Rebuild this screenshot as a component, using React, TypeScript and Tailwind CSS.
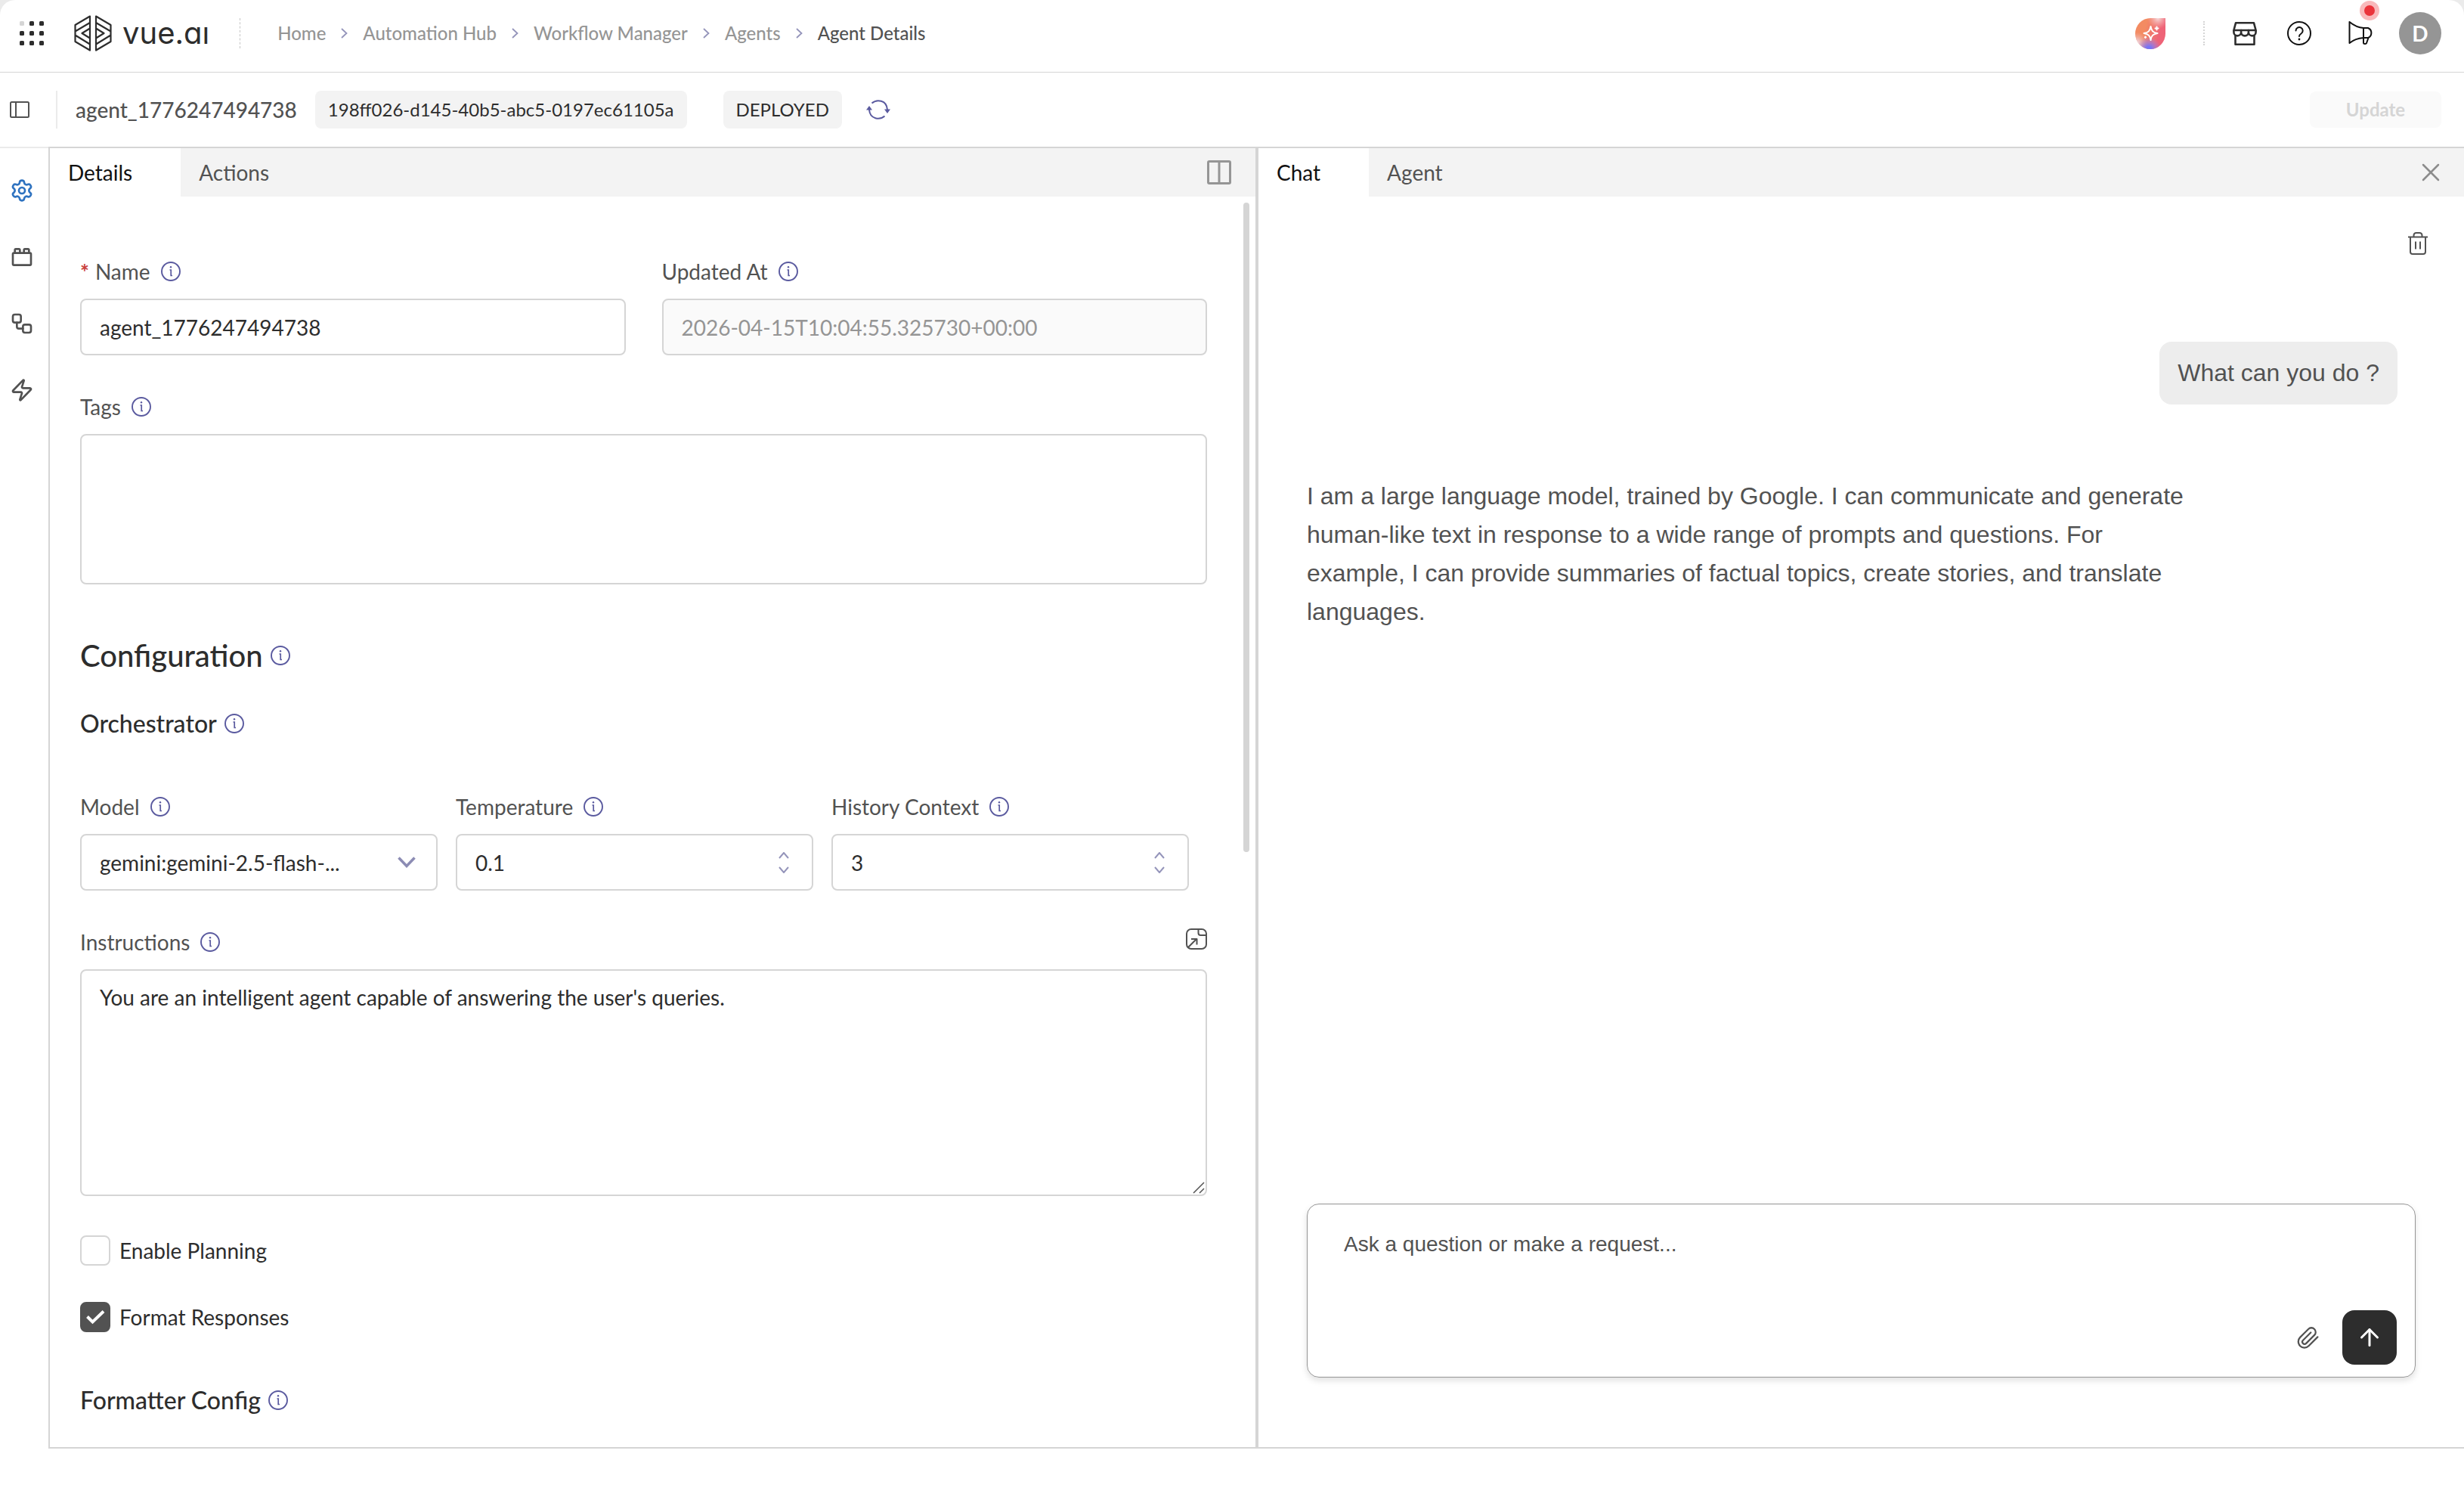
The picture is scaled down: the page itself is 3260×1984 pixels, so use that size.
import { useId, useState, type ReactNode } from 'react'
import { ArrowUp, Settings, ToyBrick, Workflow, X, Zap } from 'lucide-react'
import clsx from 'clsx'

const CRUMBS = ['Home', 'Automation Hub', 'Workflow Manager', 'Agents', 'Agent Details']

const SIDE_ITEMS = [
  { label: 'Settings', Icon: Settings },
  { label: 'Tools', Icon: ToyBrick },
  { label: 'Workflow', Icon: Workflow },
  { label: 'Triggers', Icon: Zap },
]

const FIELD =
  'block w-full rounded-lg border-2 border-[#d5d5d5] bg-white px-6 text-[28px] text-[#2d2d2d] outline-none'

function AppsIcon() {
  return (
    <svg width="32" height="32" viewBox="0 0 32 32" fill="#2d2d2d">
      {[0, 13, 26].map((y) =>
        [0, 13, 26].map((x) => (
          <rect key={`${x}-${y}`} x={x} y={y} width="6" height="6" rx="1.5" fill={x + y === 0 ? '#d5d5d5' : '#2d2d2d'} />
        )),
      )}
    </svg>
  )
}

function LogoMark() {
  const half = 'M21 1.5 1.5 13v22L21 46.500ZM21 10 1.500 21.500M21 17.500 10.500 24 21 30.500M1.500 26.500 21 38.500'
  return (
    <svg width="50" height="48" viewBox="0 0 50 48" fill="none" stroke="#2d2d2d" strokeWidth="2.2" strokeLinejoin="round">
      <path d={half} />
      <path d={half} transform="matrix(-1 0 0 1 50 0)" />
    </svg>
  )
}

function SparkIcon() {
  return (
    <svg width="40" height="41" viewBox="0 0 40 41">
      <defs>
        <linearGradient id="spark-base" x1="0" y1="0.300" x2="1" y2="0.600">
          <stop offset="0.300" stopColor="#f38b62" />
          <stop offset="0.800" stopColor="#ee6377" />
        </linearGradient>
        <radialGradient id="spark-blue" cx="0.450" cy="1" r="0.400">
          <stop offset="0.200" stopColor="#7474f8" />
          <stop offset="1" stopColor="#a58af0" stopOpacity="0" />
        </radialGradient>
        <radialGradient id="spark-pale" cx="0.750" cy="0" r="0.350">
          <stop offset="0" stopColor="#f6dcdc" />
          <stop offset="1" stopColor="#f6b0b0" stopOpacity="0" />
        </radialGradient>
        <radialGradient id="spark-left" cx="0.050" cy="0.800" r="0.350">
          <stop offset="0" stopColor="#efe0f4" />
          <stop offset="1" stopColor="#f0c0c0" stopOpacity="0" />
        </radialGradient>
      </defs>
      {['spark-base', 'spark-left', 'spark-blue', 'spark-pale'].map((id) => (
        <path key={id} fill={`url(#${id})`} d="M20 0h20v20.500A20 20.500 0 1 1 20 0Z" />
      ))}
      <g fill="none" stroke="#fff" strokeWidth="2" strokeLinejoin="round" strokeLinecap="round">
        <path d="M20.500 11c1 6 3 8 9 9-6 1-8 3-9 9-1-6-3-8-9-9 6-1 8-3 9-9Z" />
        <path d="M28.500 11.500v4M26.500 13.500h4M13.500 24.500v1.500M12.800 25.200h1.400" />
      </g>
    </svg>
  )
}

function StoreIcon() {
  return (
    <svg width="34" height="32" viewBox="0 0 34 32" fill="none" stroke="#2d2d2d" strokeWidth="2.600" strokeLinejoin="round">
      <path d="M5 2.300h24l2.600 9.700H2.400L5 2.300ZM4.500 18v12.700h25V18" />
      <path d="M2.400 12v2.500a4.800 4.800 0 0 0 9.700 0V12v2.500a4.900 4.900 0 0 0 9.800 0V12v2.500a4.800 4.800 0 0 0 9.700 0V12" />
    </svg>
  )
}

function HelpIcon() {
  return (
    <svg width="32" height="32" viewBox="0 0 32 32" fill="none" stroke="#111" strokeWidth="2" strokeLinecap="round">
      <circle cx="16" cy="16" r="15" />
      <path d="M11.500 12.500a4.600 4.600 0 1 1 7 4c-1.700 1-2.500 1.800-2.500 3.500" />
      <circle cx="16" cy="24" r="1.400" fill="#111" stroke="none" />
    </svg>
  )
}

function MegaphoneIcon() {
  return (
    <svg width="36" height="34" viewBox="0 0 36 34" fill="none" stroke="#111" strokeWidth="2" strokeLinejoin="round">
      <path d="M2.500 2v28C8 25.500 14 23.500 21 23h6a7 7 0 0 0 0-13h-6C14 9.500 8 6.500 2.500 2ZM21 10v19.500c0 2 4 2 4.200 0L27.500 23" />
    </svg>
  )
}

function PanelIcon() {
  return (
    <svg width="26" height="22" viewBox="0 0 26 22" fill="none" stroke="#525252" strokeWidth="2">
      <rect x="1" y="1" width="24" height="20" rx="1.500" />
      <path d="M8 1v20" />
    </svg>
  )
}

function RefreshIcon() {
  return (
    <svg width="32" height="26" viewBox="0 0 32 26" fill="none" stroke="#5a5a9f" strokeWidth="2">
      <path d="M7.500 4.500C14-1 27 0 28 13M24.500 21.500C18 27 5 26 4 13" />
      <path d="M24 12.500h8l-4 5.500ZM0 13.500h8l-4-5.500Z" fill="#5a5a9f" stroke="none" />
    </svg>
  )
}

function InfoIcon() {
  return (
    <svg width="26" height="26" viewBox="0 0 26 26" fill="none" stroke="#5a5a9f" className="shrink-0">
      <circle cx="13" cy="13" r="12" strokeWidth="1.900" />
      <path d="M11.500 11h1.700v7.500h1.800" strokeWidth="1.700" />
      <circle cx="13" cy="7.200" r="1.200" fill="#5a5a9f" stroke="none" />
    </svg>
  )
}

function SplitIcon() {
  return (
    <svg width="32" height="32" viewBox="0 0 32 32" fill="none" stroke="#959595" strokeWidth="3">
      <rect x="1.500" y="1.500" width="29" height="29" rx="1.500" />
      <path d="M16 2v28" />
    </svg>
  )
}

function TrashIcon() {
  return (
    <svg width="26" height="30" viewBox="0 0 26 30" fill="none" stroke="#525252" strokeWidth="2">
      <path d="M0 6.500h26M3 6.500V26a3 3 0 0 0 3 3h14a3 3 0 0 0 3-3V6.500M7.500 6V4.500c0-2 1.500-3.500 3.500-3.500h4c2 0 3.500 1.500 3.500 3.500V6M10 12.500v10M16 12.500v10" />
    </svg>
  )
}

function DocIcon() {
  return (
    <svg width="28" height="28" viewBox="0 0 28 28" fill="none" stroke="#525252" strokeWidth="2" strokeLinejoin="round">
      <rect x="1" y="1" width="26" height="26" rx="6" />
      <path d="M16.500 1v5a3 3 0 0 0 3 3H27M3 25l11-11M7 14h7.500v7.500" />
    </svg>
  )
}

function ClipIcon() {
  return (
    <svg width="32" height="32" viewBox="0 0 24 24" fill="none" stroke="#525252" strokeWidth="1.700" strokeLinecap="round">
      <path d="m22 11.500-8.900 8.900a6 6 0 0 1-8.500 0 6 6 0 0 1 0-8.500l8.200-8.200a4.200 4.200 0 0 1 6 0 4.200 4.200 0 0 1 0 6l-8.200 8.200a2.200 2.200 0 0 1-3.100 0 2.200 2.200 0 0 1 0-3.100l7.700-7.700" />
    </svg>
  )
}

function Stepper() {
  return (
    <span className="absolute inset-y-0 right-8 flex flex-col items-center justify-center gap-[10px]">
      {['M1 8l6-7 6 7', 'M1 1l6 7 6-7'].map((d, i) => (
        <button key={d} type="button" aria-label={i === 0 ? 'Increase' : 'Decrease'}>
          <svg width="14" height="9" viewBox="0 0 14 9" fill="none" stroke="#9494ba" strokeWidth="2">
            <path d={d} />
          </svg>
        </button>
      ))}
    </span>
  )
}

function FieldLabel({ htmlFor, required, children }: { htmlFor: string; required?: boolean; children: ReactNode }) {
  return (
    <div className="mb-[18px] flex h-9 items-center gap-[14px]">
      <label htmlFor={htmlFor} className="text-[28px] leading-9 text-[#525252]">
        {required && <span className="mr-2 font-bold text-[#c9403a]">*</span>}
        {children}
      </label>
      <InfoIcon />
    </div>
  )
}

function NumberField({ label, initial }: { label: string; initial: string }) {
  const id = useId()
  const [value, setValue] = useState(initial)
  return (
    <div className="pr-6">
      <FieldLabel htmlFor={id}>{label}</FieldLabel>
      <div className="relative">
        <input
          id={id}
          inputMode="decimal"
          value={value}
          onChange={(e) => setValue(e.target.value)}
          className={clsx(FIELD, 'h-[75px]')}
        />
        <Stepper />
      </div>
    </div>
  )
}

function CheckField({ label, initial }: { label: string; initial: boolean }) {
  const [checked, setChecked] = useState(initial)
  return (
    <label className="flex items-center gap-3 text-[28px] leading-10 text-[#2d2d2d]">
      <span className="relative flex">
        <input
          type="checkbox"
          checked={checked}
          onChange={(e) => setChecked(e.target.checked)}
          className="size-10 appearance-none rounded-lg border-2 border-[#d5d5d5] bg-white checked:border-[#525252] checked:bg-[#525252]"
        />
        {checked && (
          <svg className="pointer-events-none absolute inset-0" width="40" height="40" viewBox="0 0 40 40" fill="none" stroke="#fff" strokeWidth="4">
            <path d="M9.500 19.500l7 7L31 12.500" />
          </svg>
        )}
      </span>
      {label}
    </label>
  )
}

function Tabs({ items, children }: { items: string[]; children: ReactNode }) {
  const [active, setActive] = useState(items[0])
  return (
    <div className="flex h-16 shrink-0 items-stretch bg-[#f3f3f3]">
      {items.map((item) => (
        <button
          key={item}
          type="button"
          onClick={() => setActive(item)}
          className={clsx('pr-16 pl-6 text-[28px]', item === active ? 'bg-white text-[#111]' : 'text-[#525252]')}
        >
          {item}
        </button>
      ))}
      <div className="ml-auto flex items-center">{children}</div>
    </div>
  )
}

function TopBar() {
  return (
    <header className="flex h-24 shrink-0 items-center border-b border-[#d5d5d5] pr-[30px] pb-[7px] pl-[26px]">
      <button type="button" aria-label="Apps">
        <AppsIcon />
      </button>
      <a href="#" aria-label="vue.ai" className="ml-10 flex items-center gap-[14px]">
        <LogoMark />
        {/* the wordmark has a single-storey a and no dot on the i */}
        <span className="font-['Inter',sans-serif] text-[40px] leading-[44px] text-[#2d2d2d] [font-feature-settings:'cv11']">
          vue.aı
        </span>
      </a>
      <span className="ml-10 h-10 border-l border-dashed border-[#c4c4c4]" />
      <nav className="ml-[49px] flex items-center gap-5 text-[24px] font-medium text-[#959595]">
        {CRUMBS.map((crumb, i) => (
          <span key={crumb} className="flex items-center gap-5">
            {i > 0 && (
              <svg width="9" height="14" viewBox="0 0 9 14" fill="none" stroke="#9494ba" strokeWidth="1.800">
                <path d="M1 1l6.500 6L1 13" />
              </svg>
            )}
            <a href="#" className={clsx(i === CRUMBS.length - 1 && 'text-[#525252]')}>
              {crumb}
            </a>
          </span>
        ))}
      </nav>
      <div className="ml-auto flex items-center">
        <button type="button" aria-label="Assistant">
          <SparkIcon />
        </button>
        <span className="mr-9 ml-[50px] h-8 border-l-2 border-dotted border-[#d5d5d5]" />
        <button type="button" aria-label="Store" className="mr-[39px]">
          <StoreIcon />
        </button>
        <button type="button" aria-label="Help" className="mr-12">
          <HelpIcon />
        </button>
        <button type="button" aria-label="Announcements" className="relative mr-8">
          <MegaphoneIcon />
          <span className="absolute -top-[26px] -right-[6px] size-[26px] rounded-full border-[6px] border-[#f9b9bb] bg-[#ea343b]" />
        </button>
        <button type="button" className="size-14 rounded-full bg-[#959595] text-[28px] font-bold text-white">
          D
        </button>
      </div>
    </header>
  )
}

function AgentBar() {
  return (
    <div className="flex h-[98px] shrink-0 items-center pr-[30px] pl-[13px]">
      <button type="button" aria-label="Toggle sidebar">
        <PanelIcon />
      </button>
      <span className="ml-[35px] h-[50px] w-[2px] bg-[#ebebeb]" />
      <h1 className="ml-6 text-[28px] font-medium text-[#525252]">agent_1776247494738</h1>
      <span className="ml-6 rounded-lg bg-[#f3f3f3] px-[17px] text-[24px] leading-[50px] text-[#2d2d2d]">
        198ff026-d145-40b5-abc5-0197ec61105a
      </span>
      <span className="ml-12 rounded-lg bg-[#f3f3f3] px-[17px] text-[24px] leading-[50px] text-[#2d2d2d]">DEPLOYED</span>
      <button type="button" aria-label="Refresh" className="ml-8">
        <RefreshIcon />
      </button>
      <button
        type="button"
        disabled
        className="ml-auto h-12 w-[174px] rounded-lg bg-[#fafafa] text-[24px] font-bold text-[#d5d5d5]"
      >
        Update
      </button>
    </div>
  )
}

function DetailsPanel() {
  const [name, setName] = useState('agent_1776247494738')
  const [instructions, setInstructions] = useState(
    "You are an intelligent agent capable of answering the user's queries.",
  )
  return (
    <section className="relative flex min-w-0 flex-1 flex-col">
      <Tabs items={['Details', 'Actions']}>
        <button type="button" aria-label="Split view" className="mr-8">
          <SplitIcon />
        </button>
      </Tabs>
      <div className="min-h-0 flex-1 overflow-hidden pt-[81px] pr-16 pl-10">
        <div className="grid grid-cols-2 gap-12">
          <div>
            <FieldLabel htmlFor="name" required>
              Name
            </FieldLabel>
            <input id="name" value={name} onChange={(e) => setName(e.target.value)} className={clsx(FIELD, 'h-[75px]')} />
          </div>
          <div>
            <FieldLabel htmlFor="updated">Updated At</FieldLabel>
            <input
              id="updated"
              disabled
              value="2026-04-15T10:04:55.325730+00:00"
              className="block h-[75px] w-full rounded-lg border-2 border-[#d5d5d5] bg-[#fafafa] px-6 text-[28px] text-[#959595]"
            />
          </div>
        </div>

        <div className="mt-[50px]">
          <FieldLabel htmlFor="tags">Tags</FieldLabel>
          <textarea id="tags" className={clsx(FIELD, 'h-[199px] resize-none')} />
        </div>

        <h2 className="mt-[68px] flex items-center gap-[10px] text-[40px] leading-[52px] font-medium text-[#2d2d2d]">
          Configuration <InfoIcon />
        </h2>
        <h3 className="mt-11 flex items-center gap-[10px] text-[32px] leading-10 font-medium text-[#2d2d2d]">
          Orchestrator <InfoIcon />
        </h3>

        <div className="mt-[72px] grid grid-cols-3">
          <div className="pr-6">
            <FieldLabel htmlFor="model">Model</FieldLabel>
            <div className="relative">
              <select id="model" className={clsx(FIELD, 'h-[75px] appearance-none')}>
                <option>gemini:gemini-2.5-flash-...</option>
              </select>
              <svg
                className="pointer-events-none absolute top-[30px] right-[29px]"
                width="24"
                height="15"
                viewBox="0 0 24 15"
                fill="none"
                stroke="#8c8cb4"
                strokeWidth="3.500"
              >
                <path d="M1.500 1.500l10.500 11 10.500-11" />
              </svg>
            </div>
          </div>
          <NumberField label="Temperature" initial="0.1" />
          <NumberField label="History Context" initial="3" />
        </div>

        <div className="mt-[50px]">
          <div className="flex items-start justify-between">
            <FieldLabel htmlFor="instructions">Instructions</FieldLabel>
            <button type="button" aria-label="Expand editor">
              <DocIcon />
            </button>
          </div>
          <div className="relative">
            <textarea
              id="instructions"
              value={instructions}
              onChange={(e) => setInstructions(e.target.value)}
              className={clsx(FIELD, 'h-[300px] resize-none py-[14px] leading-[42px]')}
            />
            <svg className="pointer-events-none absolute right-[3px] bottom-[3px]" width="16" height="16" stroke="#525252" strokeWidth="1.500">
              <path d="M1 15L15 1M9 15l6-6" />
            </svg>
          </div>
        </div>

        <div className="mt-[52px] flex flex-col gap-12">
          <CheckField label="Enable Planning" initial={false} />
          <CheckField label="Format Responses" initial={true} />
        </div>

        <h3 className="mt-[70px] flex items-center gap-[10px] text-[32px] leading-10 font-medium text-[#2d2d2d]">
          Formatter Config <InfoIcon />
        </h3>
      </div>
      <span className="absolute top-[72px] right-2 h-1/2 w-2 rounded-full bg-[#d5d5d5]" />
    </section>
  )
}

function ChatPanel() {
  const [draft, setDraft] = useState('')
  return (
    <section className="flex min-w-0 flex-1 flex-col border-l-4 border-[#d5d5d5]">
      <Tabs items={['Chat', 'Agent']}>
        <button type="button" aria-label="Close" className="mr-6">
          <X size={40} strokeWidth={1.5} color="#8c8c8c" />
        </button>
      </Tabs>
      <div className="flex flex-1 flex-col px-16 pt-[47px] pb-[92px] font-['Liberation_Sans',Arial,sans-serif] text-[#525252]">
        <button type="button" aria-label="Clear chat" className="-mr-4 self-end">
          <TrashIcon />
        </button>
        <p className="mt-[115px] mr-6 self-end rounded-2xl bg-[#ededed] px-6 py-4 text-[32px] leading-[51px]">
          What can you do ?
        </p>
        <p className="mt-[96px] max-w-[1180px] text-[32px] leading-[51px]">
          I am a large language model, trained by Google. I can communicate and generate human-like text in response to a
          wide range of prompts and questions. For example, I can provide summaries of factual topics, create stories,
          and translate languages.
        </p>
        <form
          onSubmit={(e) => e.preventDefault()}
          className="mt-auto flex h-[230px] flex-col rounded-2xl border border-[#959595] pr-6 pb-4 pl-12 shadow-[0_4px_8px_rgba(0,0,0,0.12)]"
        >
          <textarea
            aria-label="Message"
            placeholder="Ask a question or make a request..."
            value={draft}
            onChange={(e) => setDraft(e.target.value)}
            className="w-full flex-1 resize-none pt-8 text-[28px] leading-[42px] outline-none placeholder:text-[#525252]"
          />
          <div className="flex items-center justify-end gap-[30px]">
            <button type="button" aria-label="Attach file">
              <ClipIcon />
            </button>
            <button
              type="submit"
              aria-label="Send"
              className="flex size-[72px] items-center justify-center rounded-2xl bg-[#2d2d2d] text-white"
            >
              <ArrowUp size={36} strokeWidth={2} />
            </button>
          </div>
        </form>
      </div>
    </section>
  )
}

export default function App() {
  return (
    <div className="bg-[#ebebeb] font-['Lato',sans-serif]">
      <div className="flex h-screen flex-col rounded-t-[20px] bg-white">
        <TopBar />
        <AgentBar />
        <main className="mb-[68px] flex min-h-0 flex-1">
          <nav className="flex w-16 shrink-0 flex-col gap-14 border-t-2 border-[#ebebeb] pt-10 pl-[13px]">
            {SIDE_ITEMS.map(({ label, Icon }, i) => (
              <a key={label} href="#" aria-label={label} className={i === 0 ? 'text-[#2f73c0]' : 'text-[#525252]'}>
                <Icon size={32} strokeWidth={2} />
              </a>
            ))}
          </nav>
          <div className="flex min-w-0 flex-1 border-y-2 border-l-2 border-[#d5d5d5]">
            <DetailsPanel />
            <ChatPanel />
          </div>
        </main>
      </div>
    </div>
  )
}
